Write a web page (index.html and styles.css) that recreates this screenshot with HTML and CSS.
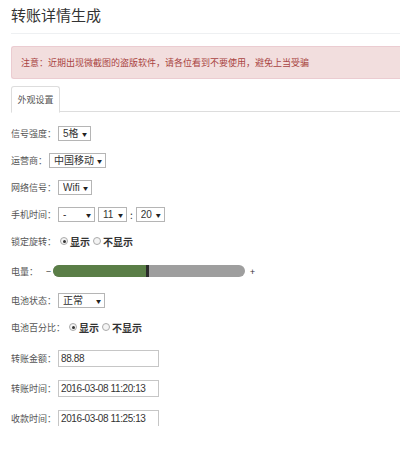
FILE: index.html
```html
<!DOCTYPE html>
<html lang="zh-CN">
<head>
<meta charset="utf-8">
<title>转账详情生成</title>
<link rel="stylesheet" href="styles.css">
</head>
<body>
<div class="page">
  <h3 class="title">转账详情生成</h3>
  <div class="alert">注意：近期出现微截图的盗版软件，请各位看到不要使用，避免上当受骗</div>
  <div class="tabs"><div class="tab">外观设置</div></div>

  <div class="form">
    <div class="group">
      <div class="row">
        <span class="label">信号强度：</span>
        <span class="sel"><select><option>1格</option><option>2格</option><option>3格</option><option>4格</option><option selected>5格</option></select></span>
      </div>
      <div class="row">
        <span class="label">运营商：</span>
        <span class="sel"><select><option selected>中国移动</option><option>中国联通</option><option>中国电信</option></select></span>
      </div>
      <div class="row">
        <span class="label">网络信号：</span>
        <span class="sel"><select><option selected>Wifi</option><option>4G</option><option>3G</option><option>2G</option></select></span>
      </div>
      <div class="row">
        <span class="label">手机时间：</span>
        <span class="sel"><select class="ampm"><option selected>-</option><option>上午</option><option>下午</option></select></span>
        <span class="sel"><select><option>10</option><option selected>11</option><option>12</option></select></span>
        <span class="colon">:</span>
        <span class="sel"><select><option>19</option><option selected>20</option><option>21</option></select></span>
      </div>
      <div class="row">
        <span class="label">锁定旋转：</span>
        <label class="radio"><input type="radio" name="lock" checked><span>显示</span></label>
        <label class="radio"><input type="radio" name="lock"><span>不显示</span></label>
      </div>
      <div class="row row-slider">
        <span class="label">电量：</span>
        <span class="pm">−</span>
        <div class="bar"><div class="fill" style="width:50%"></div></div>
        <span class="pm plus">+</span>
      </div>
      <div class="row">
        <span class="label">电池状态：</span>
        <span class="sel"><select class="state"><option selected>正常</option><option>充电中</option></select></span>
      </div>
      <div class="row">
        <span class="label">电池百分比：</span>
        <label class="radio"><input type="radio" name="pct" checked><span>显示</span></label>
        <label class="radio"><input type="radio" name="pct"><span>不显示</span></label>
      </div>
    </div>

    <div class="group group-inputs">
      <div class="row">
        <span class="label">转账金额：</span>
        <input class="text" type="text" value="88.88">
      </div>
      <div class="row">
        <span class="label">转账时间：</span>
        <input class="text" type="text" value="2016-03-08 11:20:13">
      </div>
      <div class="row">
        <span class="label">收款时间：</span>
        <input class="text" type="text" value="2016-03-08 11:25:13">
      </div>
    </div>
  </div>
</div>
</body>
</html>
```

FILE: styles.css
```css
html, body {
  margin: 0;
  padding: 0;
  background: #fff;
}

body {
  font-family: "Noto Sans CJK SC", "Liberation Sans", sans-serif;
  color: #333;
}

.page {
  padding: 0 0 0 11px;
}

.title {
  margin: 0;
  padding: 6px 0 9px 0;
  font-size: 15px;
  line-height: 18px;
  font-weight: normal;
  color: #333;
  border-bottom: 1px solid #eef0f2;
}

.alert {
  margin-top: 12px;
  height: 31px;
  line-height: 31px;
  padding-left: 9px;
  background: #f2dede;
  border: 1px solid #ebccd1;
  border-right: none;
  border-radius: 3px 0 0 3px;
  color: #a94442;
  font-size: 9px;
  white-space: nowrap;
  overflow: hidden;
}

.tabs {
  margin-top: 7px;
  height: 25px;
  border-bottom: 1px solid #ddd;
  display: flex;
}

.tab {
  width: 47px;
  height: 25px;
  line-height: 25px;
  border: 1px solid #ddd;
  border-bottom-color: #fff;
  border-radius: 3px 3px 0 0;
  background: #fff;
  text-align: center;
  font-size: 9px;
  color: #555;
  box-sizing: content-box;
}

.form {
  padding-top: 13px;
}

.group {
  display: flex;
  flex-direction: column;
  gap: 11px;
}

.group-inputs {
  margin-top: 15px;
  gap: 14px;
}

.row {
  display: flex;
  align-items: center;
  height: 16px;
}

.row-slider {
  margin-top: 3px;
  margin-bottom: 2px;
}

.label {
  font-size: 9px;
  color: #555;
  margin-right: 2px;
  white-space: nowrap;
}

.sel {
  position: relative;
  display: inline-flex;
  margin-right: 3px;
}

.sel::after {
  content: "▼";
  position: absolute;
  right: 4px;
  top: 50%;
  transform: translateY(-50%);
  font-size: 5px;
  color: #222;
  pointer-events: none;
}

.sel select {
  appearance: none;
  -webkit-appearance: none;
  height: 15px;
  margin: 0;
  padding: 0 11px 0 4px;
  border: 1px solid #b5b5b5;
  border-radius: 0;
  background: #fff;
  font-family: "Liberation Sans", "Noto Sans CJK SC", sans-serif;
  font-size: 10px;
  line-height: 13px;
  color: #333;
}

.colon {
  font-size: 10px;
  color: #333;
  margin: 0 3px 0 0;
}

.radio {
  display: inline-flex;
  align-items: center;
  margin-right: 1px;
  font-size: 10px;
  font-weight: bold;
  color: #333;
}

.radio input {
  appearance: none;
  -webkit-appearance: none;
  width: 8px;
  height: 8px;
  margin: 0 2px 0 2px;
  border: 1px solid #aaa;
  border-radius: 50%;
  background: #f4f4f4;
  box-sizing: border-box;
  position: relative;
}

.radio input:checked::after {
  content: "";
  position: absolute;
  left: 1.5px;
  top: 1.5px;
  width: 3px;
  height: 3px;
  border-radius: 50%;
  background: #333;
}

.pm {
  font-size: 9px;
  color: #333;
  margin: 0 2px 0 6px;
}

.pm.plus {
  margin: 0 0 0 5px;
}

.bar {
  width: 192px;
  height: 12px;
  border-radius: 6px;
  background: #9e9e9e;
  overflow: hidden;
  display: flex;
}

.fill {
  height: 100%;
  background: #5a7e47;
  border-right: 3px solid #2a2a2a;
  box-sizing: border-box;
}

.text {
  width: 101px;
  height: 17px;
  margin: 0;
  padding: 0 2px;
  border: 1px solid #c6c6c6;
  border-radius: 0;
  box-sizing: border-box;
  font-family: "Liberation Sans", "Noto Sans CJK SC", sans-serif;
  font-size: 10px;
  letter-spacing: -0.4px;
  color: #333;
  background: #fff;
  outline: none;
}
```
